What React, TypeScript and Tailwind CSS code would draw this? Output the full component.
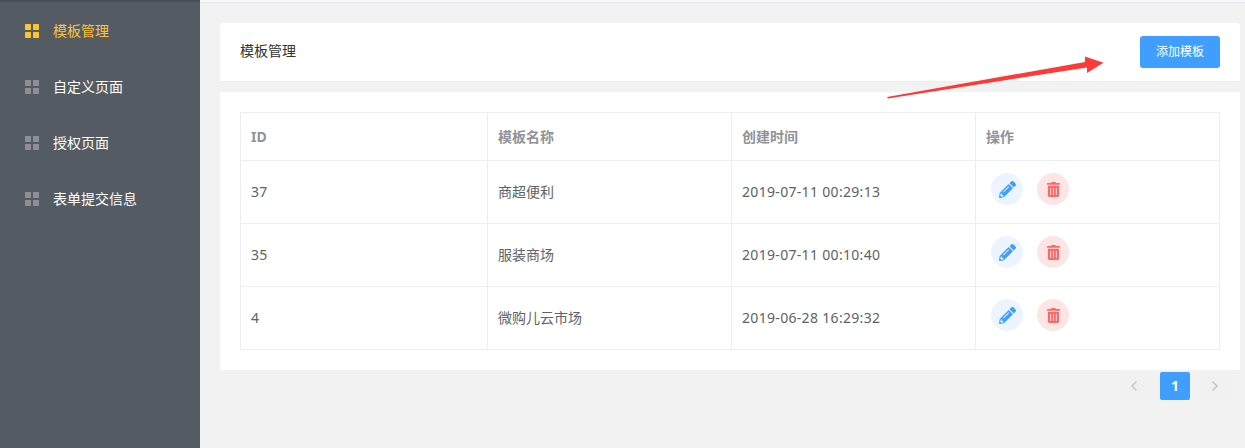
import React from 'react';
import { FaPencilAlt, FaTrashAlt } from 'react-icons/fa';
import { ChevronLeft, ChevronRight } from 'lucide-react';

const menu = ['模板管理', '自定义页面', '授权页面', '表单提交信息'];

const rows = [
  { id: 37, name: '商超便利', time: '2019-07-11 00:29:13' },
  { id: 35, name: '服装商场', time: '2019-07-11 00:10:40' },
  { id: 4, name: '微购儿云市场', time: '2019-06-28 16:29:32' },
];

function GridIcon({ color }: { color: string }) {
  return (
    <svg width="14" height="14" viewBox="0 0 14 14" fill={color}>
      <rect x="0" y="0" width="6" height="6" rx="0.5" />
      <rect x="8" y="0" width="6" height="6" rx="0.5" />
      <rect x="0" y="8" width="6" height="6" rx="0.5" />
      <rect x="8" y="8" width="6" height="6" rx="0.5" />
    </svg>
  );
}

export default function App() {
  return (
    <div className="relative flex h-[448px] w-[1245px] overflow-hidden bg-[#f2f2f2] font-['Noto_Sans','Noto_Sans_CJK_SC',sans-serif] text-sm">
      <aside className="w-[200px] shrink-0 border-t-2 border-[#484e56] bg-[#555b63] pt-px">
        {menu.map((item, i) => (
          <div key={item} className="flex h-14 items-center pl-[25px]">
            <GridIcon color={i === 0 ? '#fcc42f' : '#8d8f94'} />
            <span className={`ml-3.5 ${i === 0 ? 'text-[#fcc42f]' : 'text-white'}`}>{item}</span>
          </div>
        ))}
      </aside>

      <main className="flex-1">
        <div className="h-[3px] border-b border-[#e8e8ec] bg-[#f7f7f7]" />
        <div className="pl-5 pr-[5px] pt-5">
          <div className="flex h-[59px] items-center justify-between rounded-t border-b border-[#eeeeee] bg-white pb-[3px] pl-5 pr-5">
            <span className="text-[#333333]">模板管理</span>
            <button className="mt-[3px] h-8 w-20 rounded-[3px] bg-[#409eff] text-xs text-white">添加模板</button>
          </div>

          <div className="mt-2.5 bg-white p-5">
            <table className="w-[980px] table-fixed border-collapse border border-[#ebeef5]">
              <thead>
                <tr className="h-12 text-left font-bold text-[#909399]">
                  <th className="w-[247px] border border-[#ebeef5] pl-2.5">ID</th>
                  <th className="w-[244px] border border-[#ebeef5] pl-2.5">模板名称</th>
                  <th className="w-[244px] border border-[#ebeef5] pl-2.5">创建时间</th>
                  <th className="border border-[#ebeef5] pl-2.5">操作</th>
                </tr>
              </thead>
              <tbody className="text-[#606266]">
                {rows.map(row => (
                  <tr key={row.id} className="h-[63px]">
                    <td className="border border-[#ebeef5] pl-2.5 tracking-[0.3px]">{row.id}</td>
                    <td className="border border-[#ebeef5] pl-2.5">{row.name}</td>
                    <td className="border border-[#ebeef5] pl-2.5 tracking-[0.32px]">{row.time}</td>
                    <td className="border border-[#ebeef5] pl-[15px]">
                      <div className="flex gap-3.5 pb-1.5">
                        <span className="flex size-8 items-center justify-center rounded-full bg-[#ecf5ff] text-[#409eff]">
                          <FaPencilAlt size={17} />
                        </span>
                        <span className="flex size-8 items-center justify-center rounded-full bg-[#fee5e5] text-[#fc6868]">
                          <FaTrashAlt size={15} />
                        </span>
                      </div>
                    </td>
                  </tr>
                ))}
              </tbody>
            </table>
          </div>

          <div className="mt-0.5 flex justify-end gap-2.5 pr-2.5">
            <span className="flex h-7 w-[30px] items-center justify-center rounded-[2px] bg-[#f1f1f1] pr-0.5 text-[#c4c6cc]">
              <ChevronLeft size={16} strokeWidth={2.5} />
            </span>
            <span className="flex h-7 w-[30px] items-center justify-center rounded-[2px] bg-[#409eff] text-sm font-bold text-white">1</span>
            <span className="flex h-7 w-[30px] items-center justify-center rounded-[2px] bg-[#f1f1f1] pr-px text-[#c4c6cc]">
              <ChevronRight size={16} strokeWidth={2.5} />
            </span>
          </div>
        </div>
      </main>

      {/* annotation arrow drawn over the screenshot */}
      <svg className="absolute left-0 top-0" width="1245" height="448" viewBox="0 0 1245 448">
        <polygon points="887,97 1085,62 1085,56.5 1103.5,62.7 1087,73 1087,67.5 888,98.5" fill="#fd3a3a" />
      </svg>
    </div>
  );
}
